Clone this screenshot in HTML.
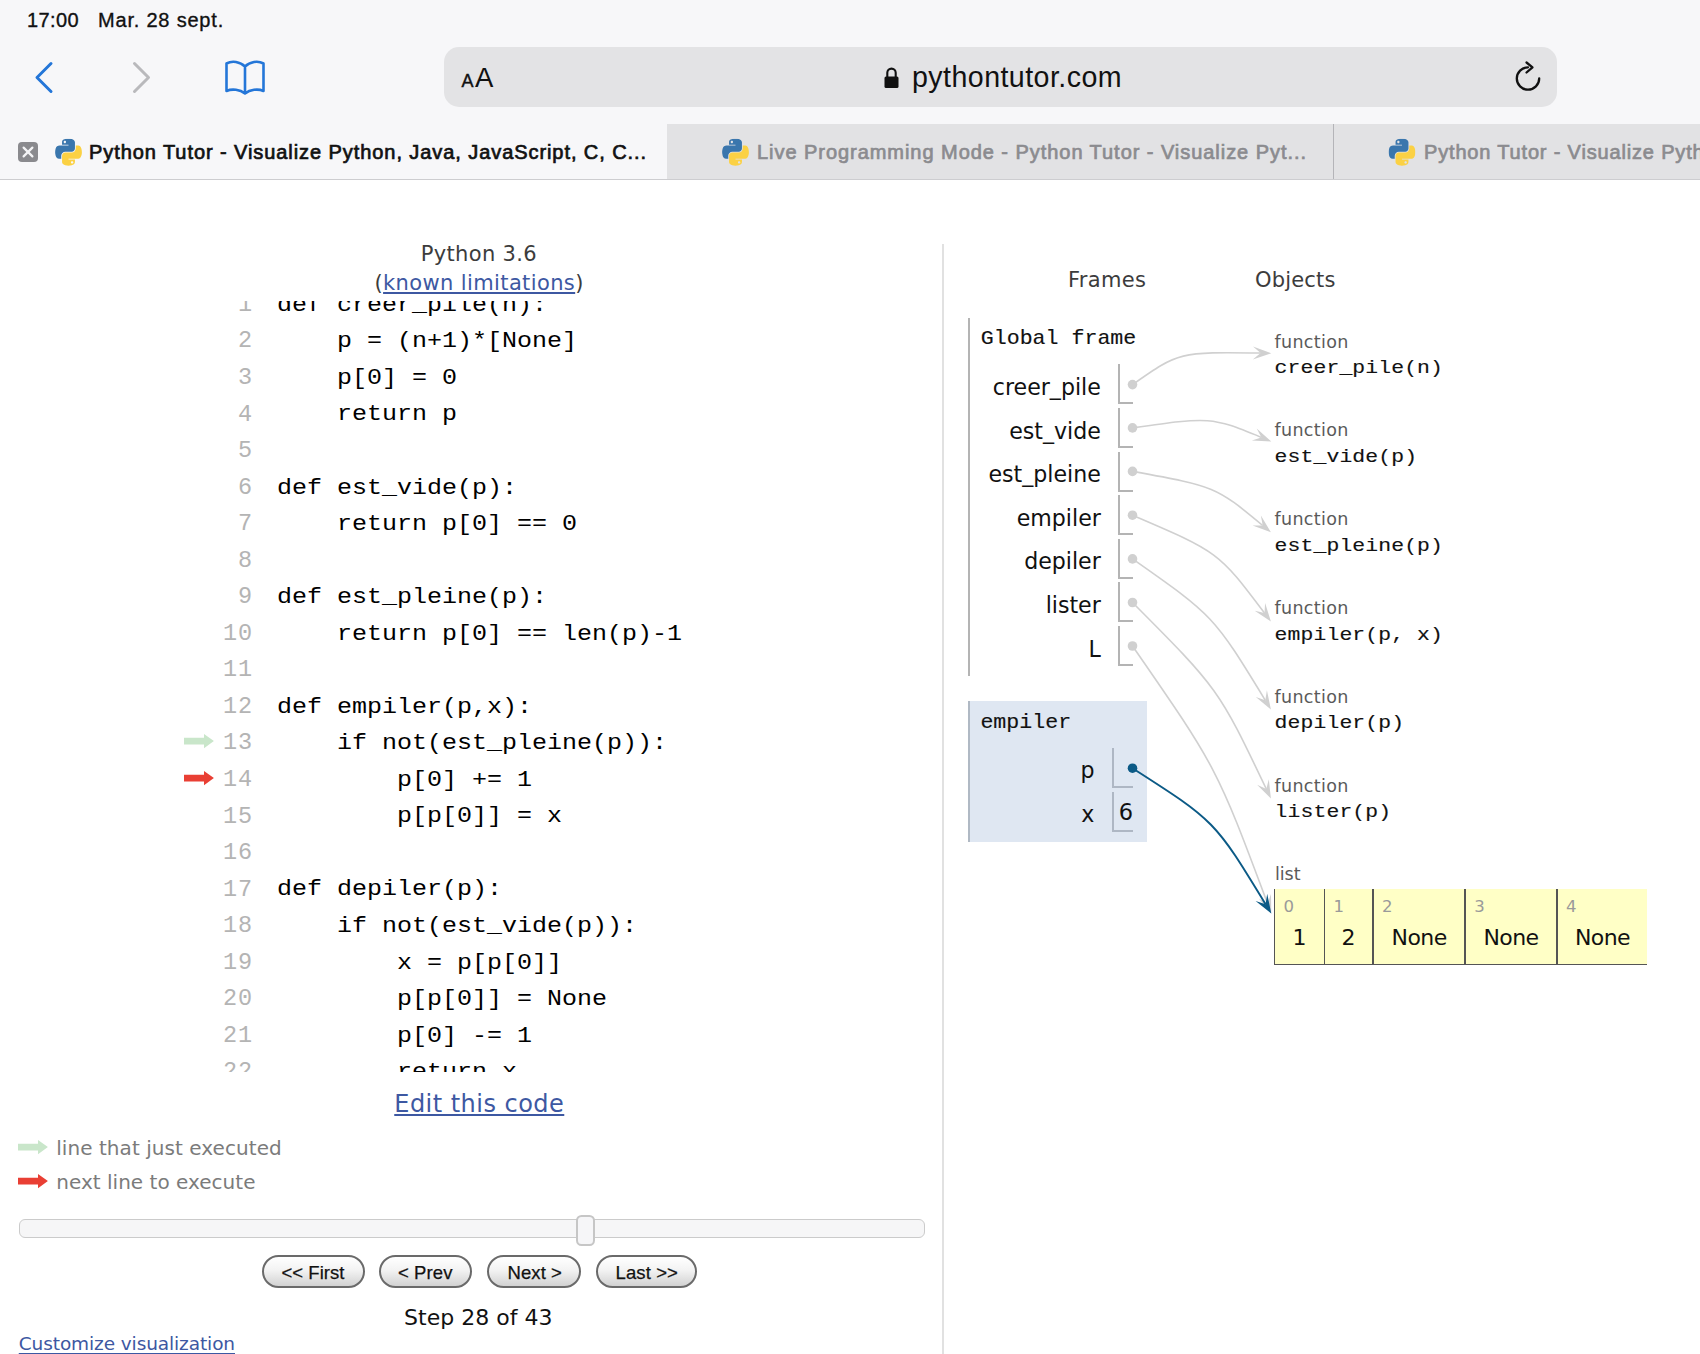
<!DOCTYPE html>
<html lang="fr"><head><meta charset="utf-8"><title>Python Tutor - Visualize Python, Java, JavaScript, C, C++, Ruby code execution</title>
<style>
html,body{margin:0;padding:0}
body{width:1700px;height:1354px;position:relative;overflow:hidden;background:#fff;-webkit-font-smoothing:antialiased}
.t{position:absolute;white-space:pre;margin:0}
.a{position:absolute}
a{color:#3d58a2;text-decoration:underline;text-decoration-thickness:1.5px;text-underline-offset:2px}
.btn{position:absolute;top:1255.3px;height:28.7px;border:2px solid #6a6a6a;border-radius:17px;background:linear-gradient(#ffffff 0%,#f3f3f3 45%,#d2d2d2 100%);box-sizing:content-box}
.cell{position:absolute;border-left:2px solid #b4b4b4;border-bottom:2px solid #b4b4b4;width:14px;height:38px;box-sizing:border-box}
</style></head>
<body>
<div class="a" style="left:0;top:0;width:1700px;height:179px;background:#f7f7f9"></div>
<div class="a" style="left:444px;top:47px;width:1113px;height:60px;border-radius:15px;background:#e3e3e5"></div>
<div class="a" style="left:667px;top:124.2px;width:1033px;height:54.8px;background:#e2e2e4"></div>
<div class="a" style="left:1332.5px;top:124.2px;width:1px;height:54.8px;background:#b4b4b8"></div>
<div class="a" style="left:0;top:179px;width:1700px;height:1.3px;background:#cdcdd0"></div>
<div class="a" style="left:18px;top:142.3px;width:20px;height:20px;border-radius:4px;background:#8a8a8e"></div>
<svg class="a" style="left:18px;top:142.3px" width="20" height="20" viewBox="0 0 20 20"><path d="M5.6 5.6L14.4 14.4M14.4 5.6L5.6 14.4" stroke="#f4f4f6" stroke-width="2.2" stroke-linecap="round"/></svg>
<svg class="a" style="left:0;top:0" width="1700" height="180" viewBox="0 0 1700 180"><symbol id="py" viewBox="0 0 111 113"><path fill="#3a76ad" d="M54.92 0C50.34.02 45.96.41 42.11 1.09 30.76 3.1 28.7 7.29 28.7 15.03v10.22h26.81v3.41H18.64c-7.79 0-14.62 4.68-16.75 13.59-2.46 10.21-2.57 16.59 0 27.25 1.91 7.94 6.46 13.59 14.25 13.59h9.22V70.84c0-8.85 7.66-16.65 16.75-16.65h26.78c7.45 0 13.4-6.14 13.4-13.63V15.03c0-7.27-6.13-12.72-13.4-13.94C64.28.33 59.5-.02 54.92 0zM40.42 8.22c2.77 0 5.03 2.3 5.03 5.12 0 2.82-2.26 5.1-5.03 5.1-2.78 0-5.03-2.28-5.03-5.1 0-2.82 2.25-5.12 5.03-5.12z"/><path fill="#fbd144" d="M85.64 28.66v11.9c0 9.23-7.83 17-16.75 17H42.11c-7.34 0-13.41 6.28-13.41 13.63v25.53c0 7.27 6.32 11.54 13.41 13.62 8.49 2.5 16.63 2.95 26.78 0 6.75-1.95 13.4-5.89 13.4-13.62V86.5H55.51v-3.41h40.19c7.79 0 10.7-5.43 13.41-13.59 2.8-8.4 2.68-16.47 0-27.25-1.93-7.76-5.61-13.59-13.41-13.59H85.64zM70.58 93.31c2.78 0 5.03 2.28 5.03 5.1 0 2.82-2.25 5.12-5.03 5.12-2.77 0-5.03-2.3-5.03-5.12 0-2.82 2.26-5.1 5.03-5.1z"/></symbol>
<path d="M51 63.5L37 77.5L51 91.5" fill="none" stroke="#2476d8" stroke-width="3" stroke-linecap="round" stroke-linejoin="round"/>
<path d="M134.5 63.5L148.5 77.5L134.5 91.5" fill="none" stroke="#b9b9bc" stroke-width="3" stroke-linecap="round" stroke-linejoin="round"/>
<path d="M245 66.5C240 61.5 232 60.5 226.500 63.5V91C232 88.500 240 89.500 245 93.500C250 89.500 258 88.500 263.500 91V63.500C258 60.500 250 61.500 245 66.500V93" fill="none" stroke="#2476d8" stroke-width="2.6" stroke-linejoin="round" stroke-linecap="round"/>
<path d="M886 76.500h11a1.500 1.500 0 0 1 1.500 1.500v8.500a1.500 1.500 0 0 1 -1.500 1.500h-11a1.500 1.500 0 0 1 -1.500 -1.500v-8.500a1.500 1.500 0 0 1 1.500 -1.500z" fill="#111"/>
<path d="M887.300 77v-4.200a4.200 4.200 0 0 1 8.400 0V77" fill="none" stroke="#111" stroke-width="2.100"/>
<path d="M1528 67.300A11.200 11.200 0 1 0 1539.200 78.500" fill="none" stroke="#111" stroke-width="2.300" stroke-linecap="round"/>
<path d="M1526.500 62.500L1532.500 67.300L1526.500 72.500" fill="none" stroke="#111" stroke-width="2.300" stroke-linecap="round" stroke-linejoin="round"/>
<use href="#py" x="55" y="138.700" width="27" height="27.200"/>
<use href="#py" x="722" y="138.700" width="27" height="27.200"/>
<use href="#py" x="1388.500" y="138.700" width="27" height="27.200"/>
</svg>
<div class="a" style="left:942px;top:244px;width:2px;height:1110px;background:#e1e1e1"></div>
<div class="a" style="left:170px;top:301px;width:760px;height:771px;overflow:hidden"><div class="t" style="right:677.9px;top:-8.05px;font:23.5px/1 'Liberation Mono', monospace;color:#b4b4b4;letter-spacing:0.9px;margin-right:-0.9px">1</div>
<div class="t" style="left:107px;top:-9.20px;font:25px/1 'Liberation Mono', monospace;color:#000;transform:scaleY(0.9);transform-origin:0 19.16px">def creer_pile(n):</div>
<div class="t" style="right:677.9px;top:28.49px;font:23.5px/1 'Liberation Mono', monospace;color:#b4b4b4;letter-spacing:0.9px;margin-right:-0.9px">2</div>
<div class="t" style="left:107px;top:27.34px;font:25px/1 'Liberation Mono', monospace;color:#000;transform:scaleY(0.9);transform-origin:0 19.16px">    p = (n+1)*[None]</div>
<div class="t" style="right:677.9px;top:65.03px;font:23.5px/1 'Liberation Mono', monospace;color:#b4b4b4;letter-spacing:0.9px;margin-right:-0.9px">3</div>
<div class="t" style="left:107px;top:63.88px;font:25px/1 'Liberation Mono', monospace;color:#000;transform:scaleY(0.9);transform-origin:0 19.16px">    p[0] = 0</div>
<div class="t" style="right:677.9px;top:101.57px;font:23.5px/1 'Liberation Mono', monospace;color:#b4b4b4;letter-spacing:0.9px;margin-right:-0.9px">4</div>
<div class="t" style="left:107px;top:100.42px;font:25px/1 'Liberation Mono', monospace;color:#000;transform:scaleY(0.9);transform-origin:0 19.16px">    return p</div>
<div class="t" style="right:677.9px;top:138.11px;font:23.5px/1 'Liberation Mono', monospace;color:#b4b4b4;letter-spacing:0.9px;margin-right:-0.9px">5</div>
<div class="t" style="right:677.9px;top:174.65px;font:23.5px/1 'Liberation Mono', monospace;color:#b4b4b4;letter-spacing:0.9px;margin-right:-0.9px">6</div>
<div class="t" style="left:107px;top:173.50px;font:25px/1 'Liberation Mono', monospace;color:#000;transform:scaleY(0.9);transform-origin:0 19.16px">def est_vide(p):</div>
<div class="t" style="right:677.9px;top:211.19px;font:23.5px/1 'Liberation Mono', monospace;color:#b4b4b4;letter-spacing:0.9px;margin-right:-0.9px">7</div>
<div class="t" style="left:107px;top:210.04px;font:25px/1 'Liberation Mono', monospace;color:#000;transform:scaleY(0.9);transform-origin:0 19.16px">    return p[0] == 0</div>
<div class="t" style="right:677.9px;top:247.73px;font:23.5px/1 'Liberation Mono', monospace;color:#b4b4b4;letter-spacing:0.9px;margin-right:-0.9px">8</div>
<div class="t" style="right:677.9px;top:284.27px;font:23.5px/1 'Liberation Mono', monospace;color:#b4b4b4;letter-spacing:0.9px;margin-right:-0.9px">9</div>
<div class="t" style="left:107px;top:283.12px;font:25px/1 'Liberation Mono', monospace;color:#000;transform:scaleY(0.9);transform-origin:0 19.16px">def est_pleine(p):</div>
<div class="t" style="right:677.9px;top:320.81px;font:23.5px/1 'Liberation Mono', monospace;color:#b4b4b4;letter-spacing:0.9px;margin-right:-0.9px">10</div>
<div class="t" style="left:107px;top:319.66px;font:25px/1 'Liberation Mono', monospace;color:#000;transform:scaleY(0.9);transform-origin:0 19.16px">    return p[0] == len(p)-1</div>
<div class="t" style="right:677.9px;top:357.35px;font:23.5px/1 'Liberation Mono', monospace;color:#b4b4b4;letter-spacing:0.9px;margin-right:-0.9px">11</div>
<div class="t" style="right:677.9px;top:393.89px;font:23.5px/1 'Liberation Mono', monospace;color:#b4b4b4;letter-spacing:0.9px;margin-right:-0.9px">12</div>
<div class="t" style="left:107px;top:392.74px;font:25px/1 'Liberation Mono', monospace;color:#000;transform:scaleY(0.9);transform-origin:0 19.16px">def empiler(p,x):</div>
<div class="t" style="right:677.9px;top:430.43px;font:23.5px/1 'Liberation Mono', monospace;color:#b4b4b4;letter-spacing:0.9px;margin-right:-0.9px">13</div>
<div class="t" style="left:107px;top:429.28px;font:25px/1 'Liberation Mono', monospace;color:#000;transform:scaleY(0.9);transform-origin:0 19.16px">    if not(est_pleine(p)):</div>
<div class="t" style="right:677.9px;top:466.97px;font:23.5px/1 'Liberation Mono', monospace;color:#b4b4b4;letter-spacing:0.9px;margin-right:-0.9px">14</div>
<div class="t" style="left:107px;top:465.82px;font:25px/1 'Liberation Mono', monospace;color:#000;transform:scaleY(0.9);transform-origin:0 19.16px">        p[0] += 1</div>
<div class="t" style="right:677.9px;top:503.51px;font:23.5px/1 'Liberation Mono', monospace;color:#b4b4b4;letter-spacing:0.9px;margin-right:-0.9px">15</div>
<div class="t" style="left:107px;top:502.36px;font:25px/1 'Liberation Mono', monospace;color:#000;transform:scaleY(0.9);transform-origin:0 19.16px">        p[p[0]] = x</div>
<div class="t" style="right:677.9px;top:540.05px;font:23.5px/1 'Liberation Mono', monospace;color:#b4b4b4;letter-spacing:0.9px;margin-right:-0.9px">16</div>
<div class="t" style="right:677.9px;top:576.59px;font:23.5px/1 'Liberation Mono', monospace;color:#b4b4b4;letter-spacing:0.9px;margin-right:-0.9px">17</div>
<div class="t" style="left:107px;top:575.44px;font:25px/1 'Liberation Mono', monospace;color:#000;transform:scaleY(0.9);transform-origin:0 19.16px">def depiler(p):</div>
<div class="t" style="right:677.9px;top:613.13px;font:23.5px/1 'Liberation Mono', monospace;color:#b4b4b4;letter-spacing:0.9px;margin-right:-0.9px">18</div>
<div class="t" style="left:107px;top:611.98px;font:25px/1 'Liberation Mono', monospace;color:#000;transform:scaleY(0.9);transform-origin:0 19.16px">    if not(est_vide(p)):</div>
<div class="t" style="right:677.9px;top:649.67px;font:23.5px/1 'Liberation Mono', monospace;color:#b4b4b4;letter-spacing:0.9px;margin-right:-0.9px">19</div>
<div class="t" style="left:107px;top:648.52px;font:25px/1 'Liberation Mono', monospace;color:#000;transform:scaleY(0.9);transform-origin:0 19.16px">        x = p[p[0]]</div>
<div class="t" style="right:677.9px;top:686.21px;font:23.5px/1 'Liberation Mono', monospace;color:#b4b4b4;letter-spacing:0.9px;margin-right:-0.9px">20</div>
<div class="t" style="left:107px;top:685.06px;font:25px/1 'Liberation Mono', monospace;color:#000;transform:scaleY(0.9);transform-origin:0 19.16px">        p[p[0]] = None</div>
<div class="t" style="right:677.9px;top:722.75px;font:23.5px/1 'Liberation Mono', monospace;color:#b4b4b4;letter-spacing:0.9px;margin-right:-0.9px">21</div>
<div class="t" style="left:107px;top:721.60px;font:25px/1 'Liberation Mono', monospace;color:#000;transform:scaleY(0.9);transform-origin:0 19.16px">        p[0] -= 1</div>
<div class="t" style="right:677.9px;top:759.29px;font:23.5px/1 'Liberation Mono', monospace;color:#b4b4b4;letter-spacing:0.9px;margin-right:-0.9px">22</div>
<div class="t" style="left:107px;top:758.14px;font:25px/1 'Liberation Mono', monospace;color:#000;transform:scaleY(0.9);transform-origin:0 19.16px">        return x</div>
<svg class="a" style="left:14px;top:432.7px" width="30" height="15" viewBox="0 0 30 15"><path d="M0 3.8H20V0L29.9 7.1L20 14.2V10.500H0Z" fill="#c9e6ca"/></svg>
<svg class="a" style="left:14px;top:469.6px" width="30" height="15" viewBox="0 0 30 15"><path d="M0 3.8H20V0L29.9 7.1L20 14.2V10.500H0Z" fill="#e93f34"/></svg></div>
<svg class="a" style="left:18px;top:1139.5px" width="30" height="15" viewBox="0 0 30 15"><path d="M0 3.8H20V0L29.9 7.1L20 14.2V10.500H0Z" fill="#c9e6ca"/></svg>
<svg class="a" style="left:18px;top:1173.8px" width="30" height="15" viewBox="0 0 30 15"><path d="M0 3.8H20V0L29.9 7.1L20 14.2V10.500H0Z" fill="#e93f34"/></svg>
<div class="a" style="left:18.5px;top:1218.5px;width:904px;height:17.5px;border:1px solid #cbcbcb;border-radius:6px;background:#f6f6f7"></div>
<div class="a" style="left:575.5px;top:1214.5px;width:15px;height:27.4px;border:2px solid #c6c6c6;border-radius:5.5px;background:#f6f6f8"></div>
<div class="btn" style="left:262px;width:99.1px"></div>
<div class="btn" style="left:379px;width:89.3px"></div>
<div class="btn" style="left:487px;width:89.6px"></div>
<div class="btn" style="left:595.75px;width:97.6px"></div>
<div class="a" style="left:968px;top:318px;width:2px;height:358px;background:#b4b4b4"></div>
<div class="cell" style="left:1118.3px;top:364.4px;height:40px;width:15px"></div>
<div class="cell" style="left:1118.3px;top:408.0px;height:40px;width:15px"></div>
<div class="cell" style="left:1118.3px;top:451.6px;height:40px;width:15px"></div>
<div class="cell" style="left:1118.3px;top:495.2px;height:40px;width:15px"></div>
<div class="cell" style="left:1118.3px;top:538.8px;height:40px;width:15px"></div>
<div class="cell" style="left:1118.3px;top:582.4px;height:40px;width:15px"></div>
<div class="cell" style="left:1118.3px;top:626.0px;height:40px;width:15px"></div>
<div class="a" style="left:968.6px;top:701.4px;width:178.4px;height:140.2px;background:#dfe7f2"></div>
<div class="a" style="left:968px;top:701.4px;width:2px;height:140.2px;background:#b0b9c4"></div>
<div class="cell" style="left:1112.3px;top:748.4px;height:39.8px;width:21px;border-color:#aeb7c4"></div>
<div class="cell" style="left:1112.3px;top:792.4px;height:39.8px;width:21px;border-color:#aeb7c4"></div>
<div class="a" style="left:1274.6px;top:889.2px;width:372.4px;height:76px;background:#ffffc6;border-bottom:1.7px solid #555;box-sizing:border-box"></div>
<div class="a" style="left:1273.8px;top:889.2px;width:1.7px;height:76px;background:#555"></div>
<div class="a" style="left:1323.8px;top:889.2px;width:1.7px;height:76px;background:#555"></div>
<div class="a" style="left:1372.2px;top:889.2px;width:1.7px;height:76px;background:#555"></div>
<div class="a" style="left:1464.4px;top:889.2px;width:1.7px;height:76px;background:#555"></div>
<div class="a" style="left:1556.2px;top:889.2px;width:1.7px;height:76px;background:#555"></div>
<svg class="a" style="left:0;top:0;pointer-events:none" width="1700" height="1354" viewBox="0 0 1700 1354">
<path d="M1132.5 384.6C1178.9 351.9 1178.9 351.9 1260.6 353.0" fill="none" stroke="#d0d0d0" stroke-width="1.6"/>
<path d="M1271.3 353.2L1252.8 359.4L1260.6 353.0L1253.0 346.4Z" fill="#d0d0d0"/>
<circle cx="1132.5" cy="384.6" r="4.8" fill="#d0d0d0"/>
<path d="M1132.5 427.9C1210.9 416.7 1210.9 416.7 1261.4 437.4" fill="none" stroke="#d0d0d0" stroke-width="1.6"/>
<path d="M1271.3 441.5L1251.8 440.5L1261.4 437.4L1256.7 428.5Z" fill="#d0d0d0"/>
<circle cx="1132.5" cy="427.9" r="4.8" fill="#d0d0d0"/>
<path d="M1132.5 471.4C1215.7 486.4 1215.7 486.4 1262.7 525.5" fill="none" stroke="#d0d0d0" stroke-width="1.6"/>
<path d="M1270.9 532.3L1252.6 525.5L1262.7 525.5L1260.9 515.5Z" fill="#d0d0d0"/>
<circle cx="1132.5" cy="471.4" r="4.8" fill="#d0d0d0"/>
<path d="M1132.5 515.2C1218.7 552.0 1218.7 552.0 1264.5 613.0" fill="none" stroke="#d0d0d0" stroke-width="1.6"/>
<path d="M1270.9 621.5L1254.7 610.7L1264.5 613.0L1265.1 602.9Z" fill="#d0d0d0"/>
<circle cx="1132.5" cy="515.2" r="4.8" fill="#d0d0d0"/>
<path d="M1132.5 558.9C1213.7 615.8 1213.7 615.8 1265.3 700.3" fill="none" stroke="#d0d0d0" stroke-width="1.6"/>
<path d="M1270.9 709.4L1255.8 697.1L1265.3 700.3L1266.9 690.3Z" fill="#d0d0d0"/>
<circle cx="1132.5" cy="558.9" r="4.8" fill="#d0d0d0"/>
<path d="M1132.5 602.5C1218.7 689.1 1218.7 689.1 1266.3 789.0" fill="none" stroke="#d0d0d0" stroke-width="1.6"/>
<path d="M1270.9 798.6L1257.1 784.8L1266.3 789.0L1268.8 779.2Z" fill="#d0d0d0"/>
<circle cx="1132.5" cy="602.5" r="4.8" fill="#d0d0d0"/>
<path d="M1132.5 646.0C1216.9 767.8 1216.9 767.8 1267.6 903.6" fill="none" stroke="#d0d0d0" stroke-width="1.6"/>
<path d="M1271.3 913.6L1258.8 898.6L1267.6 903.6L1271.0 894.1Z" fill="#d0d0d0"/>
<circle cx="1132.5" cy="646.0" r="4.8" fill="#d0d0d0"/>
<path d="M1132.5 768.2C1214.9 820.9 1214.9 820.9 1265.6 904.2" fill="none" stroke="#0b5a86" stroke-width="1.95"/>
<path d="M1271.3 913.6L1255.6 900.9L1265.6 904.2L1267.2 893.8Z" fill="#0b5a86"/>
<circle cx="1132.5" cy="768.2" r="4.8" fill="#0b5a86"/>
</svg>
<div class="t " id="t0" style="top:9.57px;font:400 20px/1 'Liberation Sans', sans-serif;color:#111;left:27.00px;letter-spacing:0.388px;-webkit-text-stroke:0.35px #111;">17:00</div>
<div class="t " id="t1" style="top:9.57px;font:400 20px/1 'Liberation Sans', sans-serif;color:#111;left:98.00px;letter-spacing:0.798px;-webkit-text-stroke:0.35px #111;">Mar. 28 sept.</div>
<div class="t " id="t2" style="top:72.26px;font:400 18px/1 'Liberation Sans', sans-serif;color:#111;left:461.50px;letter-spacing:-1.016px;-webkit-text-stroke:0.4px #111;">A</div>
<div class="t " id="t3" style="top:64.22px;font:400 27.5px/1 'Liberation Sans', sans-serif;color:#111;left:475.00px;letter-spacing:-0.344px;">A</div>
<div class="t " id="t4" style="top:62.79px;font:400 28.6px/1 'Liberation Sans', sans-serif;color:#111;left:912.00px;letter-spacing:0.436px;">pythontutor.com</div>
<div class="t " id="t5" style="top:141.82px;font:400 20px/1 'Liberation Sans', sans-serif;color:#111;left:89.00px;letter-spacing:0.926px;-webkit-text-stroke:0.7px #111;">Python Tutor - Visualize Python, Java, JavaScript, C, C...</div>
<div class="t " id="t6" style="top:141.82px;font:400 20px/1 'Liberation Sans', sans-serif;color:#8b8b8f;left:757.00px;letter-spacing:0.952px;-webkit-text-stroke:0.7px #8b8b8f;">Live Programming Mode - Python Tutor - Visualize Pyt...</div>
<div class="t " id="t7" style="top:141.82px;font:400 20px/1 'Liberation Sans', sans-serif;color:#8b8b8f;left:1424.00px;letter-spacing:0.830px;-webkit-text-stroke:0.7px #8b8b8f;">Python Tutor - Visualize Python, Java</div>
<div class="t " id="t8" style="top:243.93px;font:400 21px/1 'DejaVu Sans', 'Liberation Sans', sans-serif;color:#3c3c3c;left:420.75px;letter-spacing:0.338px;">Python 3.6</div>
<div class="t " id="t9" style="top:272.93px;font:400 21px/1 'DejaVu Sans', 'Liberation Sans', sans-serif;color:#3c3c3c;left:374.50px;letter-spacing:0.375px;">(<a href="#">known limitations</a>)</div>
<div class="t " id="t10" style="top:1092.40px;font:400 24px/1 'DejaVu Sans', 'Liberation Sans', sans-serif;color:#3d58a2;left:394.25px;letter-spacing:0.471px;"><a href="#">Edit this code</a></div>
<div class="t " id="t11" style="top:1138.03px;font:400 20px/1 'DejaVu Sans', 'Liberation Sans', sans-serif;color:#7b7b7b;left:56.25px;letter-spacing:0.053px;">line that just executed</div>
<div class="t " id="t12" style="top:1171.78px;font:400 20px/1 'DejaVu Sans', 'Liberation Sans', sans-serif;color:#7b7b7b;left:56.25px;letter-spacing:0.020px;">next line to execute</div>
<div class="t " id="t13" style="top:1264.24px;font:400 18.5px/1 'Liberation Sans', sans-serif;color:#111;left:281.50px;letter-spacing:0.035px;-webkit-text-stroke:0.25px #111;">&lt;&lt; First</div>
<div class="t " id="t14" style="top:1264.24px;font:400 18.5px/1 'Liberation Sans', sans-serif;color:#111;left:398.00px;letter-spacing:0.086px;-webkit-text-stroke:0.25px #111;">&lt; Prev</div>
<div class="t " id="t15" style="top:1264.24px;font:400 18.5px/1 'Liberation Sans', sans-serif;color:#111;left:507.50px;letter-spacing:0.086px;-webkit-text-stroke:0.25px #111;">Next &gt;</div>
<div class="t " id="t16" style="top:1264.24px;font:400 18.5px/1 'Liberation Sans', sans-serif;color:#111;left:615.50px;letter-spacing:0.112px;-webkit-text-stroke:0.25px #111;">Last &gt;&gt;</div>
<div class="t " id="t17" style="top:1307.34px;font:400 22px/1 'DejaVu Sans', 'Liberation Sans', sans-serif;color:#111;left:404.00px;letter-spacing:0.018px;">Step 28 of 43</div>
<div class="t " id="t18" style="top:1335.30px;font:400 18.5px/1 'DejaVu Sans', 'Liberation Sans', sans-serif;color:#3d58a2;left:18.75px;letter-spacing:-0.100px;"><a href="#" style="text-decoration-thickness:1px;text-underline-offset:2.5px">Customize visualization</a></div>
<div class="t " id="t19" style="top:270.43px;font:400 21px/1 'DejaVu Sans', 'Liberation Sans', sans-serif;color:#3c3c3c;left:1068.00px;letter-spacing:0.312px;">Frames</div>
<div class="t " id="t20" style="top:270.43px;font:400 21px/1 'DejaVu Sans', 'Liberation Sans', sans-serif;color:#3c3c3c;left:1255.00px;letter-spacing:0.165px;">Objects</div>
<div class="t " id="t21" style="top:327.69px;font:400 21.6px/1 'Liberation Mono', monospace;color:#111;left:980.75px;transform:scaleY(0.9);transform-origin:0 16.56px;-webkit-text-stroke:0.15px #111;">Global frame</div>
<div class="t " id="t22" style="top:376.00px;font:400 22.1px/1 'DejaVu Sans', 'Liberation Sans', sans-serif;color:#111;right:599.20px;">creer_pile</div>
<div class="t " id="t23" style="top:419.60px;font:400 22.1px/1 'DejaVu Sans', 'Liberation Sans', sans-serif;color:#111;right:599.20px;">est_vide</div>
<div class="t " id="t24" style="top:463.20px;font:400 22.1px/1 'DejaVu Sans', 'Liberation Sans', sans-serif;color:#111;right:599.20px;">est_pleine</div>
<div class="t " id="t25" style="top:506.80px;font:400 22.1px/1 'DejaVu Sans', 'Liberation Sans', sans-serif;color:#111;right:599.20px;">empiler</div>
<div class="t " id="t26" style="top:550.40px;font:400 22.1px/1 'DejaVu Sans', 'Liberation Sans', sans-serif;color:#111;right:599.20px;">depiler</div>
<div class="t " id="t27" style="top:594.00px;font:400 22.1px/1 'DejaVu Sans', 'Liberation Sans', sans-serif;color:#111;right:599.20px;">lister</div>
<div class="t " id="t28" style="top:637.60px;font:400 22.1px/1 'DejaVu Sans', 'Liberation Sans', sans-serif;color:#111;right:599.20px;">L</div>
<div class="t " id="t29" style="top:711.94px;font:400 21.6px/1 'Liberation Mono', monospace;color:#111;left:980.40px;transform:scaleY(0.9);transform-origin:0 16.56px;-webkit-text-stroke:0.15px #111;">empiler</div>
<div class="t " id="t30" style="top:759.00px;font:400 22.1px/1 'DejaVu Sans', 'Liberation Sans', sans-serif;color:#111;right:605.60px;">p</div>
<div class="t " id="t31" style="top:803.20px;font:400 22.1px/1 'DejaVu Sans', 'Liberation Sans', sans-serif;color:#111;right:605.60px;">x</div>
<div class="t " id="t32" style="top:801.17px;font:400 22.5px/1 'DejaVu Sans', 'Liberation Sans', sans-serif;color:#111;left:1118.80px;">6</div>
<div class="t " id="t33" style="top:333.50px;font:400 17.5px/1 'DejaVu Sans', 'Liberation Sans', sans-serif;color:#5a5a5a;left:1274.60px;letter-spacing:0.312px;">function</div>
<div class="t " id="t34" style="top:357.10px;font:400 21.4px/1 'Liberation Mono', monospace;color:#111;left:1274.60px;letter-spacing:0.120px;transform:scaleY(0.9);transform-origin:0 16.40px;-webkit-text-stroke:0.15px #111;">creer_pile(n)</div>
<div class="t " id="t35" style="top:422.30px;font:400 17.5px/1 'DejaVu Sans', 'Liberation Sans', sans-serif;color:#5a5a5a;left:1274.60px;letter-spacing:0.312px;">function</div>
<div class="t " id="t36" style="top:445.90px;font:400 21.4px/1 'Liberation Mono', monospace;color:#111;left:1274.60px;letter-spacing:0.120px;transform:scaleY(0.9);transform-origin:0 16.40px;-webkit-text-stroke:0.15px #111;">est_vide(p)</div>
<div class="t " id="t37" style="top:511.10px;font:400 17.5px/1 'DejaVu Sans', 'Liberation Sans', sans-serif;color:#5a5a5a;left:1274.60px;letter-spacing:0.312px;">function</div>
<div class="t " id="t38" style="top:534.70px;font:400 21.4px/1 'Liberation Mono', monospace;color:#111;left:1274.60px;letter-spacing:0.120px;transform:scaleY(0.9);transform-origin:0 16.40px;-webkit-text-stroke:0.15px #111;">est_pleine(p)</div>
<div class="t " id="t39" style="top:599.90px;font:400 17.5px/1 'DejaVu Sans', 'Liberation Sans', sans-serif;color:#5a5a5a;left:1274.60px;letter-spacing:0.312px;">function</div>
<div class="t " id="t40" style="top:623.50px;font:400 21.4px/1 'Liberation Mono', monospace;color:#111;left:1274.60px;letter-spacing:0.120px;transform:scaleY(0.9);transform-origin:0 16.40px;-webkit-text-stroke:0.15px #111;">empiler(p, x)</div>
<div class="t " id="t41" style="top:688.70px;font:400 17.5px/1 'DejaVu Sans', 'Liberation Sans', sans-serif;color:#5a5a5a;left:1274.60px;letter-spacing:0.312px;">function</div>
<div class="t " id="t42" style="top:712.30px;font:400 21.4px/1 'Liberation Mono', monospace;color:#111;left:1274.60px;letter-spacing:0.120px;transform:scaleY(0.9);transform-origin:0 16.40px;-webkit-text-stroke:0.15px #111;">depiler(p)</div>
<div class="t " id="t43" style="top:777.50px;font:400 17.5px/1 'DejaVu Sans', 'Liberation Sans', sans-serif;color:#5a5a5a;left:1274.60px;letter-spacing:0.312px;">function</div>
<div class="t " id="t44" style="top:801.10px;font:400 21.4px/1 'Liberation Mono', monospace;color:#111;left:1274.60px;letter-spacing:0.120px;transform:scaleY(0.9);transform-origin:0 16.40px;-webkit-text-stroke:0.15px #111;">lister(p)</div>
<div class="t " id="t45" style="top:866.30px;font:400 17.5px/1 'DejaVu Sans', 'Liberation Sans', sans-serif;color:#5a5a5a;left:1275.00px;letter-spacing:-0.051px;">list</div>
<div class="t " id="t46" style="top:898.94px;font:400 16.5px/1 'DejaVu Sans', 'Liberation Sans', sans-serif;color:#9a9a9a;left:1283.60px;">0</div>
<div class="t " id="t47" style="top:898.94px;font:400 16.5px/1 'DejaVu Sans', 'Liberation Sans', sans-serif;color:#9a9a9a;left:1333.60px;">1</div>
<div class="t " id="t48" style="top:898.94px;font:400 16.5px/1 'DejaVu Sans', 'Liberation Sans', sans-serif;color:#9a9a9a;left:1382.00px;">2</div>
<div class="t " id="t49" style="top:898.94px;font:400 16.5px/1 'DejaVu Sans', 'Liberation Sans', sans-serif;color:#9a9a9a;left:1474.20px;">3</div>
<div class="t " id="t50" style="top:898.94px;font:400 16.5px/1 'DejaVu Sans', 'Liberation Sans', sans-serif;color:#9a9a9a;left:1566.00px;">4</div>
<div class="t " id="t51" style="top:927.39px;font:400 22px/1 'DejaVu Sans', 'Liberation Sans', sans-serif;color:#111;left:1292.50px;">1</div>
<div class="t " id="t52" style="top:927.39px;font:400 22px/1 'DejaVu Sans', 'Liberation Sans', sans-serif;color:#111;left:1341.50px;">2</div>
<div class="t " id="t53" style="top:927.39px;font:400 22px/1 'DejaVu Sans', 'Liberation Sans', sans-serif;color:#111;left:1391.60px;letter-spacing:-0.602px;">None</div>
<div class="t " id="t54" style="top:927.39px;font:400 22px/1 'DejaVu Sans', 'Liberation Sans', sans-serif;color:#111;left:1483.50px;letter-spacing:-0.602px;">None</div>
<div class="t " id="t55" style="top:927.39px;font:400 22px/1 'DejaVu Sans', 'Liberation Sans', sans-serif;color:#111;left:1575.00px;letter-spacing:-0.602px;">None</div>
</body></html>
